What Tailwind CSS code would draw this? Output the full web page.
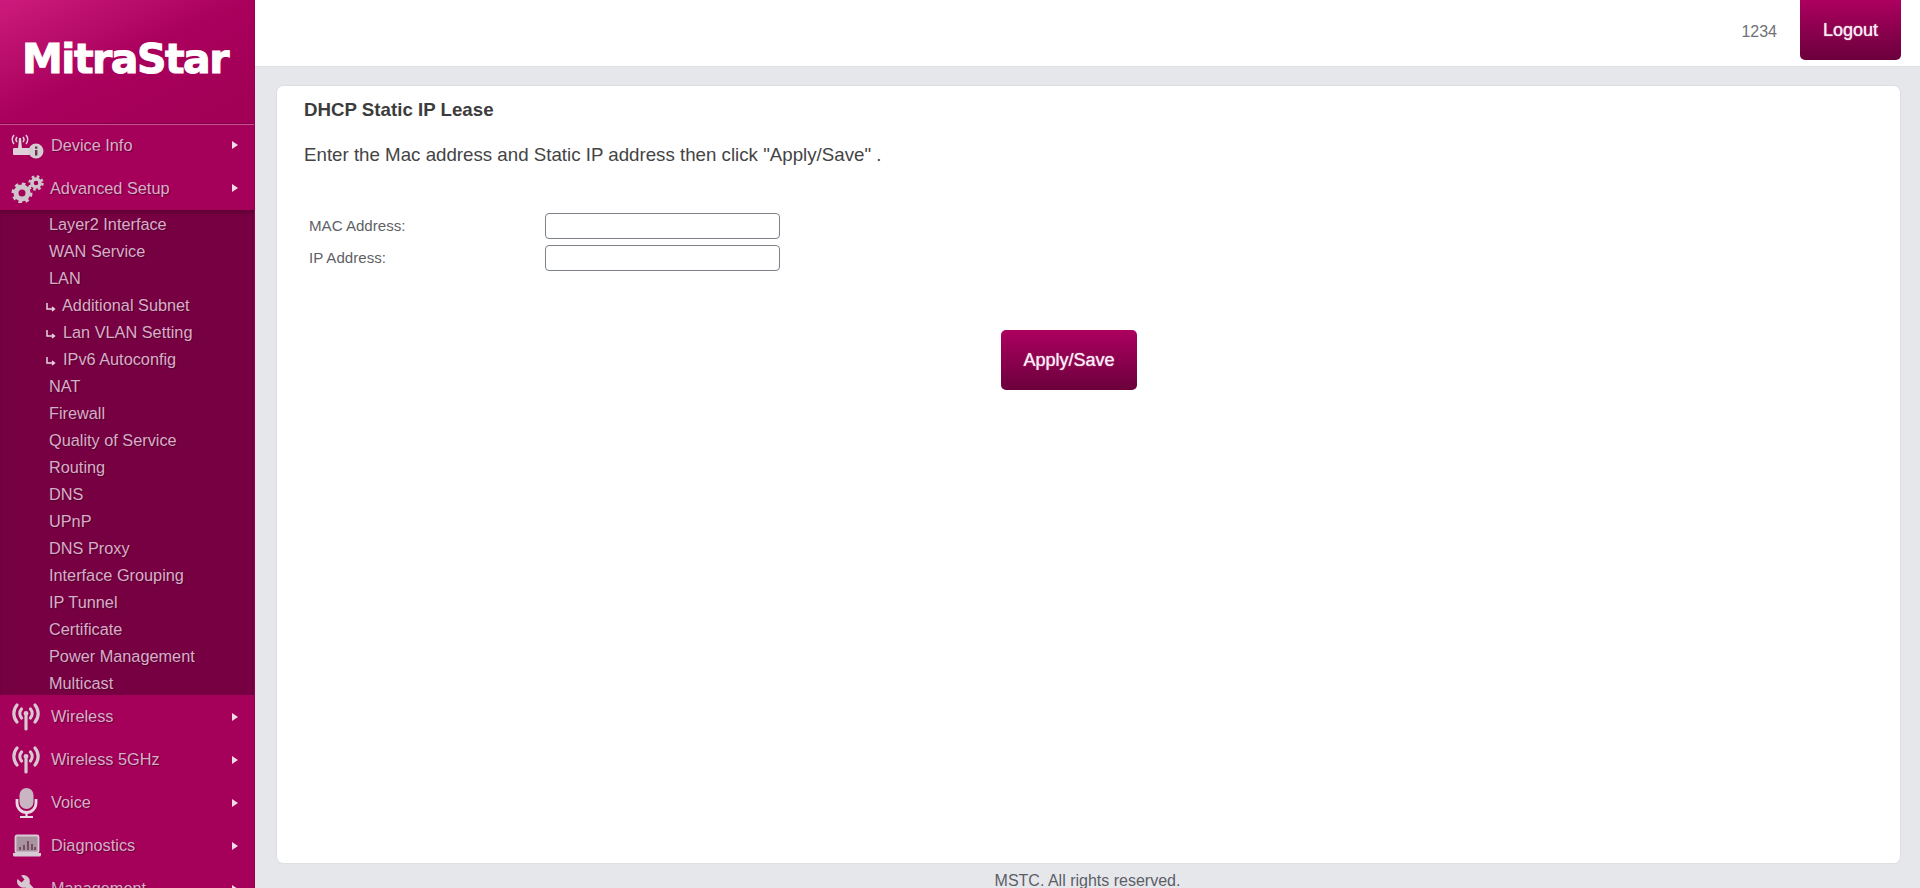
<!DOCTYPE html>
<html lang="en">
<head>
    <meta charset="UTF-8">
    <meta name="viewport" content="width=device-width, initial-scale=1.0">
    <title>DHCP Static IP Lease</title>
    <script src="https://cdn.jsdelivr.net/npm/@tailwindcss/browser@4"></script>
</head>
<body class="bg-[#e6e7eb] font-['Liberation_Sans',Arial,sans-serif] overflow-hidden">
    <div class="flex h-[888px] overflow-hidden">
        <!-- Sidebar -->
        <aside class="w-[255px] shrink-0 bg-[#a5005a] text-[#d6aeca] border-r border-[#97004f] [text-shadow:1px_1px_1px_rgba(60,0,30,0.6)]">
            <div class="h-[124px] border-b border-[#8a0049] bg-gradient-to-br from-[#cc1a7c] via-[#a9005c] to-[#a00055] flex items-center justify-center pb-[4px] pr-[4px]">
                <span class="font-['DejaVu_Sans',sans-serif] font-bold text-[41px] tracking-[-1.5px] text-white [-webkit-text-stroke:1px_white] [text-shadow:none]">MitraStar</span>
            </div>
            <div class="border-t border-[#c4518f]">
                <a class="flex items-center h-[42px] relative text-[16.3px]">
                    <svg class="ml-[10px] w-[34px] h-[28px] shrink-0" viewBox="0 0 34 28">
                        <g fill="none" stroke="#e0d0da" stroke-width="1.6">
                            <path d="M4 3a7 7 0 0 0 0 9M16 3a7 7 0 0 1 0 9M7 5a4 4 0 0 0 0 5M13 5a4 4 0 0 1 0 5"/>
                        </g>
                        <path d="M9 6h2l1 11H8z" fill="#e0d0da"/>
                        <rect x="3" y="16" width="17" height="7" rx="1" fill="#e0d0da"/>
                        <circle cx="26" cy="19" r="7.5" fill="#d5ccd2"/>
                        <rect x="25" y="18" width="2.4" height="5.5" fill="#6a3050"/>
                        <rect x="25" y="14.5" width="2.4" height="2.2" fill="#6a3050"/>
                    </svg>
                    <span class="ml-[7px] -mt-[2px]">Device Info</span>
                    <span class="absolute left-[232px] -mt-[2px] w-0 h-0 border-y-[4px] border-y-transparent border-l-[6px] border-l-[#eedde8]"></span>
                </a>
                <a class="flex items-center h-[43px] relative text-[16.3px]">
                    <svg class="ml-[10px] w-[34px] h-[28px] shrink-0" viewBox="0 0 34 28">
                        <circle cx="12" cy="18" r="6" fill="none" stroke="#cfc4cb" stroke-width="5"/>
                        <circle cx="12" cy="18" r="9" fill="none" stroke="#cfc4cb" stroke-width="3" stroke-dasharray="3.5 3.5"/>
                        <circle cx="26" cy="8" r="4" fill="none" stroke="#cfc4cb" stroke-width="3.5"/>
                        <circle cx="26" cy="8" r="6.5" fill="none" stroke="#cfc4cb" stroke-width="2.4" stroke-dasharray="2.6 2.5"/>
                    </svg>
                    <span class="ml-[6px] -mt-[1px]">Advanced Setup</span>
                    <span class="absolute left-[232px] -mt-[1px] w-0 h-0 border-y-[4px] border-y-transparent border-l-[6px] border-l-[#eedde8]"></span>
                </a>
                <!-- Open submenu -->
                <ul class="bg-[#770042] text-[16.3px] pl-[49px] pt-[1px] h-[485px] shadow-[inset_0_4px_4px_-2px_rgba(60,0,30,0.5)]">
                    <li class="h-[27px] leading-[27px]">Layer2 Interface</li>
                    <li class="h-[27px] leading-[27px]">WAN Service</li>
                    <li class="h-[27px] leading-[27px]">LAN</li>
                    <li class="h-[27px] leading-[27px] -ml-[3px] flex items-center gap-[3px]">
                        <svg class="w-[10px] h-[10px] mt-[2px]" viewBox="0 0 10 10" fill="none" stroke="#e8d4e2" stroke-width="1.5"><path d="M1 1v6h7M6 5l2.4 2L6 9"/></svg>
                        <span class="ml-[3px]">Additional Subnet</span>
                    </li>
                    <li class="h-[27px] leading-[27px] -ml-[3px] flex items-center gap-[4px]">
                        <svg class="w-[10px] h-[10px] mt-[2px]" viewBox="0 0 10 10" fill="none" stroke="#e8d4e2" stroke-width="1.5"><path d="M1 1v6h7M6 5l2.4 2L6 9"/></svg>
                        <span class="ml-[3px]">Lan VLAN Setting</span>
                    </li>
                    <li class="h-[27px] leading-[27px] -ml-[3px] flex items-center gap-[4px]">
                        <svg class="w-[10px] h-[10px] mt-[2px]" viewBox="0 0 10 10" fill="none" stroke="#e8d4e2" stroke-width="1.5"><path d="M1 1v6h7M6 5l2.4 2L6 9"/></svg>
                        <span class="ml-[3px]">IPv6 Autoconfig</span>
                    </li>
                    <li class="h-[27px] leading-[27px]">NAT</li>
                    <li class="h-[27px] leading-[27px]">Firewall</li>
                    <li class="h-[27px] leading-[27px]">Quality of Service</li>
                    <li class="h-[27px] leading-[27px]">Routing</li>
                    <li class="h-[27px] leading-[27px]">DNS</li>
                    <li class="h-[27px] leading-[27px]">UPnP</li>
                    <li class="h-[27px] leading-[27px]">DNS Proxy</li>
                    <li class="h-[27px] leading-[27px]">Interface Grouping</li>
                    <li class="h-[27px] leading-[27px]">IP Tunnel</li>
                    <li class="h-[27px] leading-[27px]">Certificate</li>
                    <li class="h-[27px] leading-[27px]">Power Management</li>
                    <li class="h-[27px] leading-[27px]">Multicast</li>
                </ul>
                <a class="flex items-center h-[43px] relative text-[16.3px]">
                    <svg class="ml-[11px] w-[30px] h-[30px] shrink-0" viewBox="0 0 30 30" fill="none" stroke="#d8c8d2" stroke-width="3.2" stroke-linecap="round">
                        <path d="M6 3a13 13 0 0 0 0 17M24 3a13 13 0 0 1 0 17M10.5 7a7 7 0 0 0 0 9M19.5 7a7 7 0 0 1 0 9"/>
                        <circle cx="15" cy="11.5" r="2.4" fill="#d8c8d2" stroke="none"/>
                        <path d="M15 14v13"/>
                    </svg>
                    <span class="ml-[10px]">Wireless</span>
                    <span class="absolute left-[232px] w-0 h-0 border-y-[4px] border-y-transparent border-l-[6px] border-l-[#eedde8]"></span>
                </a>
                <a class="flex items-center h-[43px] relative text-[16.3px]">
                    <svg class="ml-[11px] w-[30px] h-[30px] shrink-0" viewBox="0 0 30 30" fill="none" stroke="#d8c8d2" stroke-width="3.2" stroke-linecap="round">
                        <path d="M6 3a13 13 0 0 0 0 17M24 3a13 13 0 0 1 0 17M10.5 7a7 7 0 0 0 0 9M19.5 7a7 7 0 0 1 0 9"/>
                        <circle cx="15" cy="11.5" r="2.4" fill="#d8c8d2" stroke="none"/>
                        <path d="M15 14v13"/>
                    </svg>
                    <span class="ml-[10px]">Wireless 5GHz</span>
                    <span class="absolute left-[232px] w-0 h-0 border-y-[4px] border-y-transparent border-l-[6px] border-l-[#eedde8]"></span>
                </a>
                <a class="flex items-center h-[43px] relative text-[16.3px]">
                    <svg class="ml-[13px] w-[26px] h-[32px] shrink-0" viewBox="0 0 26 32">
                        <rect x="6.5" y="1" width="14" height="21" rx="7" fill="#c9b6c2"/>
                        <path d="M4 12v4a9.5 9.5 0 0 0 19 0v-4" fill="none" stroke="#e8dce4" stroke-width="2.8"/>
                        <path d="M13.5 25v4M7 30h13" stroke="#e8dce4" stroke-width="2.2"/>
                    </svg>
                    <span class="ml-[12px]">Voice</span>
                    <span class="absolute left-[232px] w-0 h-0 border-y-[4px] border-y-transparent border-l-[6px] border-l-[#eedde8]"></span>
                </a>
                <a class="flex items-center h-[43px] relative text-[16.3px]">
                    <svg class="ml-[12px] w-[30px] h-[24px] shrink-0" viewBox="0 0 30 24">
                        <rect x="3.5" y="1.5" width="23" height="17" rx="1.5" fill="#a8949f" stroke="#d8ccd4" stroke-width="1.8"/>
                        <path d="M8 16v-3M12 16v-5M16 16V7M20 16v-6M23 16v-3" stroke="#6b3a55" stroke-width="1.6"/>
                        <path d="M1 19h28v2a1.5 1.5 0 0 1-1.5 1.5h-25A1.5 1.5 0 0 1 1 21z" fill="#d8ccd4"/>
                    </svg>
                    <span class="ml-[9px]">Diagnostics</span>
                    <span class="absolute left-[232px] w-0 h-0 border-y-[4px] border-y-transparent border-l-[6px] border-l-[#eedde8]"></span>
                </a>
                <a class="flex items-center h-[43px] relative text-[16.3px]">
                    <svg class="ml-[16px] w-[28px] h-[30px] shrink-0" viewBox="0 0 28 30">
                        <path d="M5 1.5a6.5 6.5 0 0 1 8.5 8L25 22a3 3 0 0 1-4 4L9.5 13.5A6.5 6.5 0 0 1 1.5 5l4 3.5 3-3z" fill="#d8c8d2"/>
                    </svg>
                    <span class="ml-[7px]">Management</span>
                    <span class="absolute left-[232px] w-0 h-0 border-y-[4px] border-y-transparent border-l-[6px] border-l-[#eedde8]"></span>
                </a>
            </div>
        </aside>

        <!-- Main -->
        <div class="flex-1 min-w-0 flex flex-col">
            <header class="h-[67px] shrink-0 bg-white border-b border-[#dfe0e4] flex justify-end items-start pr-[19px]">
                <span class="text-[16px] text-[#6f7178] mt-[20px] mr-[23px]">1234</span>
                <button class="w-[101px] h-[60px] rounded-b-[5px] bg-gradient-to-b from-[#ad005f] to-[#6b003c] text-[#fbeaf4] text-[18px] [text-shadow:0_0_1px_#fbeaf4]">Logout</button>
            </header>
            <main class="ml-[22px] mr-[20px] mt-[19px] h-[777px] shrink-0 bg-white rounded-[6px] shadow-[0_0_2px_rgba(0,0,0,0.12)] pl-[27px] pt-[13px] text-[#444444]">
                <h1 class="text-[18.72px] leading-[21px] font-bold text-[#3c3c3c]">DHCP Static IP Lease</h1>
                <p class="mt-[24px] text-[18.72px] leading-[21px]">Enter the Mac address and Static IP address then click "Apply/Save" .</p>
                <div class="mt-[48px] text-[15.1px] text-[#5f5f66]">
                    <div class="flex items-center h-[26px]">
                        <label class="w-[241px] pl-[5px]">MAC Address:</label>
                        <input type="text" class="w-[235px] h-[26px] border border-[#7d8288] rounded-[4px] bg-white">
                    </div>
                    <div class="flex items-center h-[26px] mt-[6px]">
                        <label class="w-[241px] pl-[5px]">IP Address:</label>
                        <input type="text" class="w-[235px] h-[26px] border border-[#7d8288] rounded-[4px] bg-white">
                    </div>
                </div>
                <div class="mt-[59px] ml-[697px]">
                    <button class="w-[136px] h-[60px] rounded-[5px] bg-gradient-to-b from-[#ad005f] to-[#6b003c] text-[#fbeaf4] text-[18px] [text-shadow:0_0_1px_#fbeaf4]">Apply/Save</button>
                </div>
            </main>
            <footer class="pt-[9px] text-center text-[16px] leading-[18px] text-[#5c5e66]">MSTC. All rights reserved.</footer>
        </div>
    </div>
</body>
</html>
